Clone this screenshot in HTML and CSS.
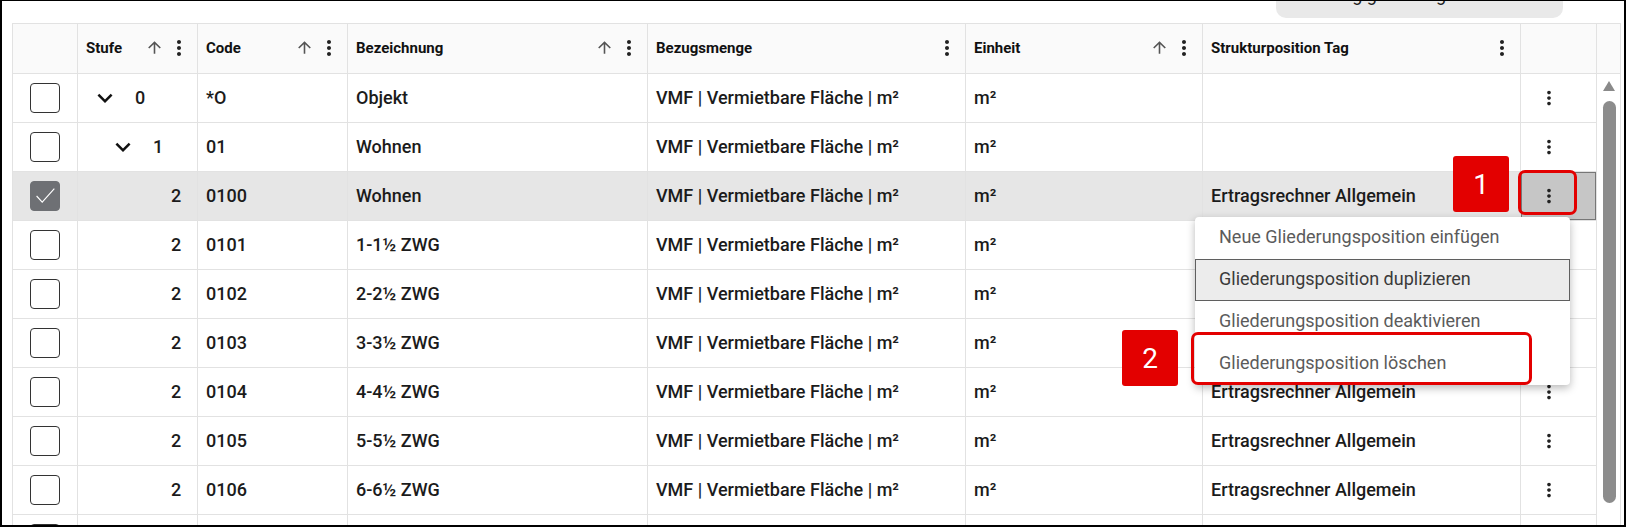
FILE: index.html
```html
<!DOCTYPE html>
<html lang="de">
<head>
    <meta charset="UTF-8">
    <meta name="viewport" content="width=device-width, initial-scale=1.0">
    <title>Gliederung</title>
    <link rel="stylesheet" href="styles.css">
</head>
<body>
    <!-- shared icons (material paths) -->
    <svg class="sprite" xmlns="http://www.w3.org/2000/svg">
        <symbol id="i-sort" viewBox="0 0 24 24"><path d="M4 12l1.41 1.41L11 7.83V20h2V7.83l5.58 5.59L20 12l-8-8-8 8z"/></symbol>
        <symbol id="i-more" viewBox="0 0 24 24"><path d="M12 8c1.1 0 2-.9 2-2s-.9-2-2-2-2 .9-2 2 .9 2 2 2zm0 2c-1.1 0-2 .9-2 2s.9 2 2 2 2-.9 2-2-.9-2-2-2zm0 6c-1.1 0-2 .9-2 2s.9 2 2 2 2-.9 2-2-.9-2-2-2z"/></symbol>
        <symbol id="i-expand" viewBox="0 0 24 24"><path d="M16.59 8.59L12 13.17 7.41 8.59 6 10l6 6 6-6z"/></symbol>
        <symbol id="i-check" viewBox="0 0 30 30"><polyline points="6,15 12,21.5 25,7"/></symbol>
    </svg>

    <div class="frame">
        <div class="toolbar">
            <button class="tool-btn">Gliederung genehmigen</button>
        </div>

        <div class="table">
            <div class="thead">
                <div class="th"></div>
                <div class="th">
                    <span class="th-label">Stufe</span>
                    <svg class="sort-icon"><use href="#i-sort"/></svg>
                    <svg class="more-icon"><use href="#i-more"/></svg>
                </div>
                <div class="th">
                    <span class="th-label">Code</span>
                    <svg class="sort-icon"><use href="#i-sort"/></svg>
                    <svg class="more-icon"><use href="#i-more"/></svg>
                </div>
                <div class="th">
                    <span class="th-label">Bezeichnung</span>
                    <svg class="sort-icon"><use href="#i-sort"/></svg>
                    <svg class="more-icon"><use href="#i-more"/></svg>
                </div>
                <div class="th">
                    <span class="th-label">Bezugsmenge</span>
                    <svg class="more-icon"><use href="#i-more"/></svg>
                </div>
                <div class="th">
                    <span class="th-label">Einheit</span>
                    <svg class="sort-icon"><use href="#i-sort"/></svg>
                    <svg class="more-icon"><use href="#i-more"/></svg>
                </div>
                <div class="th">
                    <span class="th-label">Strukturposition Tag</span>
                    <svg class="more-icon"><use href="#i-more"/></svg>
                </div>
                <div class="th"></div>
                <div class="th"></div>
            </div>

            <div class="tbody">
                <div class="rows">
                    <div class="tr">
                        <div class="td td-check"><span class="checkbox"></span></div>
                        <div class="td td-level lvl-0"><span class="toggle"><svg><use href="#i-expand"/></svg></span><span>0</span></div>
                        <div class="td">*O</div>
                        <div class="td">Objekt</div>
                        <div class="td">VMF | Vermietbare Fläche | m²</div>
                        <div class="td">m²</div>
                        <div class="td"></div>
                        <div class="td td-action"><button class="row-menu"><svg><use href="#i-more"/></svg></button></div>
                    </div>
                    <div class="tr">
                        <div class="td td-check"><span class="checkbox"></span></div>
                        <div class="td td-level lvl-1"><span class="toggle"><svg><use href="#i-expand"/></svg></span><span>1</span></div>
                        <div class="td">01</div>
                        <div class="td">Wohnen</div>
                        <div class="td">VMF | Vermietbare Fläche | m²</div>
                        <div class="td">m²</div>
                        <div class="td"></div>
                        <div class="td td-action"><button class="row-menu"><svg><use href="#i-more"/></svg></button></div>
                    </div>
                    <div class="tr selected">
                        <div class="td td-check"><span class="checkbox checked"><svg class="check-icon"><use href="#i-check"/></svg></span></div>
                        <div class="td td-level lvl-2"><span class="toggle"></span><span>2</span></div>
                        <div class="td">0100</div>
                        <div class="td">Wohnen</div>
                        <div class="td">VMF | Vermietbare Fläche | m²</div>
                        <div class="td">m²</div>
                        <div class="td">Ertragsrechner Allgemein</div>
                        <div class="td td-action"><button class="row-menu active"><svg><use href="#i-more"/></svg></button></div>
                    </div>
                    <div class="tr">
                        <div class="td td-check"><span class="checkbox"></span></div>
                        <div class="td td-level lvl-2"><span class="toggle"></span><span>2</span></div>
                        <div class="td">0101</div>
                        <div class="td">1-1½ ZWG</div>
                        <div class="td">VMF | Vermietbare Fläche | m²</div>
                        <div class="td">m²</div>
                        <div class="td">Ertragsrechner Allgemein</div>
                        <div class="td td-action"><button class="row-menu"><svg><use href="#i-more"/></svg></button></div>
                    </div>
                    <div class="tr">
                        <div class="td td-check"><span class="checkbox"></span></div>
                        <div class="td td-level lvl-2"><span class="toggle"></span><span>2</span></div>
                        <div class="td">0102</div>
                        <div class="td">2-2½ ZWG</div>
                        <div class="td">VMF | Vermietbare Fläche | m²</div>
                        <div class="td">m²</div>
                        <div class="td">Ertragsrechner Allgemein</div>
                        <div class="td td-action"><button class="row-menu"><svg><use href="#i-more"/></svg></button></div>
                    </div>
                    <div class="tr">
                        <div class="td td-check"><span class="checkbox"></span></div>
                        <div class="td td-level lvl-2"><span class="toggle"></span><span>2</span></div>
                        <div class="td">0103</div>
                        <div class="td">3-3½ ZWG</div>
                        <div class="td">VMF | Vermietbare Fläche | m²</div>
                        <div class="td">m²</div>
                        <div class="td">Ertragsrechner Allgemein</div>
                        <div class="td td-action"><button class="row-menu"><svg><use href="#i-more"/></svg></button></div>
                    </div>
                    <div class="tr">
                        <div class="td td-check"><span class="checkbox"></span></div>
                        <div class="td td-level lvl-2"><span class="toggle"></span><span>2</span></div>
                        <div class="td">0104</div>
                        <div class="td">4-4½ ZWG</div>
                        <div class="td">VMF | Vermietbare Fläche | m²</div>
                        <div class="td">m²</div>
                        <div class="td">Ertragsrechner Allgemein</div>
                        <div class="td td-action"><button class="row-menu"><svg><use href="#i-more"/></svg></button></div>
                    </div>
                    <div class="tr">
                        <div class="td td-check"><span class="checkbox"></span></div>
                        <div class="td td-level lvl-2"><span class="toggle"></span><span>2</span></div>
                        <div class="td">0105</div>
                        <div class="td">5-5½ ZWG</div>
                        <div class="td">VMF | Vermietbare Fläche | m²</div>
                        <div class="td">m²</div>
                        <div class="td">Ertragsrechner Allgemein</div>
                        <div class="td td-action"><button class="row-menu"><svg><use href="#i-more"/></svg></button></div>
                    </div>
                    <div class="tr">
                        <div class="td td-check"><span class="checkbox"></span></div>
                        <div class="td td-level lvl-2"><span class="toggle"></span><span>2</span></div>
                        <div class="td">0106</div>
                        <div class="td">6-6½ ZWG</div>
                        <div class="td">VMF | Vermietbare Fläche | m²</div>
                        <div class="td">m²</div>
                        <div class="td">Ertragsrechner Allgemein</div>
                        <div class="td td-action"><button class="row-menu"><svg><use href="#i-more"/></svg></button></div>
                    </div>
                    <div class="tr">
                        <div class="td td-check"><span class="checkbox"></span></div>
                        <div class="td td-level lvl-2"><span class="toggle"></span><span>2</span></div>
                        <div class="td">0107</div>
                        <div class="td">7-7½ ZWG</div>
                        <div class="td">VMF | Vermietbare Fläche | m²</div>
                        <div class="td">m²</div>
                        <div class="td">Ertragsrechner Allgemein</div>
                        <div class="td td-action"><button class="row-menu"><svg><use href="#i-more"/></svg></button></div>
                    </div>
                </div>
                <div class="scrollbar">
                    <span class="scroll-up"></span>
                    <span class="scroll-thumb"></span>
                </div>
            </div>
        </div>

        <!-- row context menu -->
        <div class="menu">
            <div class="menu-item">Neue Gliederungsposition einfügen</div>
            <div class="menu-item focused">Gliederungsposition duplizieren</div>
            <div class="menu-item">Gliederungsposition deaktivieren</div>
            <div class="menu-item">Gliederungsposition löschen</div>
        </div>

        <!-- step markers -->
        <div class="badge badge-1">1</div>
        <div class="mark mark-1"></div>
        <div class="badge badge-2">2</div>
        <div class="mark mark-2"></div>
    </div>
</body>
</html>
```

FILE: styles.css
```css
* {
    margin: 0;
    padding: 0;
    box-sizing: border-box;
}

body {
    font-family: Roboto, "Noto Sans", sans-serif;
    background: #ffffff;
    color: #1b1b1b;
}

.sprite {
    position: absolute;
    width: 0;
    height: 0;
    overflow: hidden;
}

.frame {
    position: relative;
    width: 1626px;
    height: 527px;
    border: 2px solid #000;
    border-top-width: 1px;
    padding: 0 3px 0 10px;
    overflow: hidden;
}

/* toolbar above the grid, scrolled mostly out of view */
.toolbar {
    height: 22px;
    display: flex;
    justify-content: flex-end;
    align-items: flex-start;
    padding-right: 58px;
}

.tool-btn {
    width: 287px;
    height: 40px;
    margin-top: -23px;
    border: none;
    border-radius: 10px;
    background: #e9e9e9;
    display: flex;
    align-items: flex-end;
    padding: 0 0 13px 0;
    font: inherit;
    font-size: 18px;
    line-height: 21px;
    color: #222;
}

/* grid */
.table {
    border: 1px solid #e2e2e2;
    border-bottom: none;
}

.thead {
    display: grid;
    grid-template-columns: 65px 120px 150px 300px 318px 237px 318px 76px 23px;
    height: 50px;
    background: #fafafa;
    border-bottom: 1px solid #e2e2e2;
}

.th {
    display: flex;
    align-items: center;
    padding: 0 6px 2px 8px;
    border-right: 1px solid #e2e2e2;
    font-size: 15px;
    font-weight: 700;
    color: #111;
    white-space: nowrap;
}

.th:last-child {
    border-right: none;
}

.th-label {
    flex: 1;
}

.sort-icon {
    width: 19px;
    height: 19px;
    fill: #555;
    margin-right: 3px;
}

.more-icon {
    width: 24px;
    height: 24px;
    fill: #222;
}

.tbody {
    display: flex;
}

.rows {
    width: 1584px;
}

.tr {
    display: grid;
    grid-template-columns: 65px 120px 150px 300px 318px 237px 318px 76px;
    height: 49px;
}

.tr.selected {
    background: #e6e6e6;
}

.td {
    display: flex;
    align-items: center;
    padding: 0 8px 2px;
    border-right: 1px solid #e2e2e2;
    border-bottom: 1px solid #e2e2e2;
    font-size: 18px;
    font-weight: 500;
    white-space: nowrap;
    overflow: hidden;
}

.td-check {
    justify-content: center;
    padding: 0;
}

.checkbox {
    width: 30px;
    height: 30px;
    border: 1px solid #333;
    border-radius: 4px;
    background: #fff;
    display: flex;
    align-items: center;
    justify-content: center;
}

.checkbox.checked {
    background: #6e7074;
    border-color: #6e7074;
}

.check-icon {
    width: 28px;
    height: 28px;
    fill: none;
    stroke: #fff;
    stroke-width: 1.2;
}

/* tree indentation, 18px per level */
.td-level {
    padding-left: 12px;
    padding-bottom: 0;
}

.td-level.lvl-1 {
    padding-left: 30px;
}

.td-level.lvl-2 {
    padding-left: 48px;
}

.toggle {
    width: 30px;
    height: 30px;
    margin-right: 15px;
    display: flex;
    flex-shrink: 0;
}

.toggle svg {
    width: 30px;
    height: 30px;
    fill: #111;
}

.td-level > span:last-child {
    padding-bottom: 2px;
}

.td-action {
    padding: 0;
}

.row-menu {
    width: 100%;
    height: 100%;
    border: 1px solid transparent;
    background: transparent;
    display: flex;
    align-items: center;
    padding-left: 16px;
}

.row-menu.active {
    background: #c6c6c6;
    border-color: #777;
}

.row-menu svg {
    width: 22px;
    height: 22px;
    fill: #222;
}

.scrollbar {
    width: 23px;
    display: flex;
    flex-direction: column;
    gap: 10px;
    padding: 7px 0 0 6px;
}

.scroll-up {
    width: 0;
    height: 0;
    border-left: 6.5px solid transparent;
    border-right: 6.5px solid transparent;
    border-bottom: 10px solid #8a8a8a;
}

.scroll-thumb {
    width: 13px;
    height: 402px;
    border-radius: 7px;
    background: #8c8c8c;
}

/* context menu */
.menu {
    position: absolute;
    left: 1193px;
    top: 216px;
    width: 375px;
    background: #fff;
    border-radius: 4px;
    box-shadow: 0 3px 8px rgba(0, 0, 0, 0.28);
    z-index: 5;
}

.menu-item {
    height: 42px;
    display: flex;
    align-items: center;
    padding: 0 0 3px 23px;
    border: 1px solid transparent;
    font-size: 18px;
    color: #5b5b5b;
    white-space: nowrap;
}

.menu-item.focused {
    background: #ececec;
    border-color: #5f5f5f;
    color: #3a3a3a;
}

/* numbered step markers */
.badge {
    position: absolute;
    width: 56px;
    height: 56px;
    background: #e30000;
    color: #fff;
    border-radius: 3px;
    display: flex;
    align-items: center;
    justify-content: center;
    font-size: 28px;
    z-index: 6;
}

.badge-1 {
    left: 1451px;
    top: 155px;
}

.badge-2 {
    left: 1120px;
    top: 329px;
}

.mark {
    position: absolute;
    border: 3px solid #e30000;
    border-radius: 7px;
    z-index: 6;
}

.mark-1 {
    left: 1516px;
    top: 169px;
    width: 59px;
    height: 45px;
}

.mark-2 {
    left: 1189px;
    top: 331px;
    width: 341px;
    height: 53px;
}
```
